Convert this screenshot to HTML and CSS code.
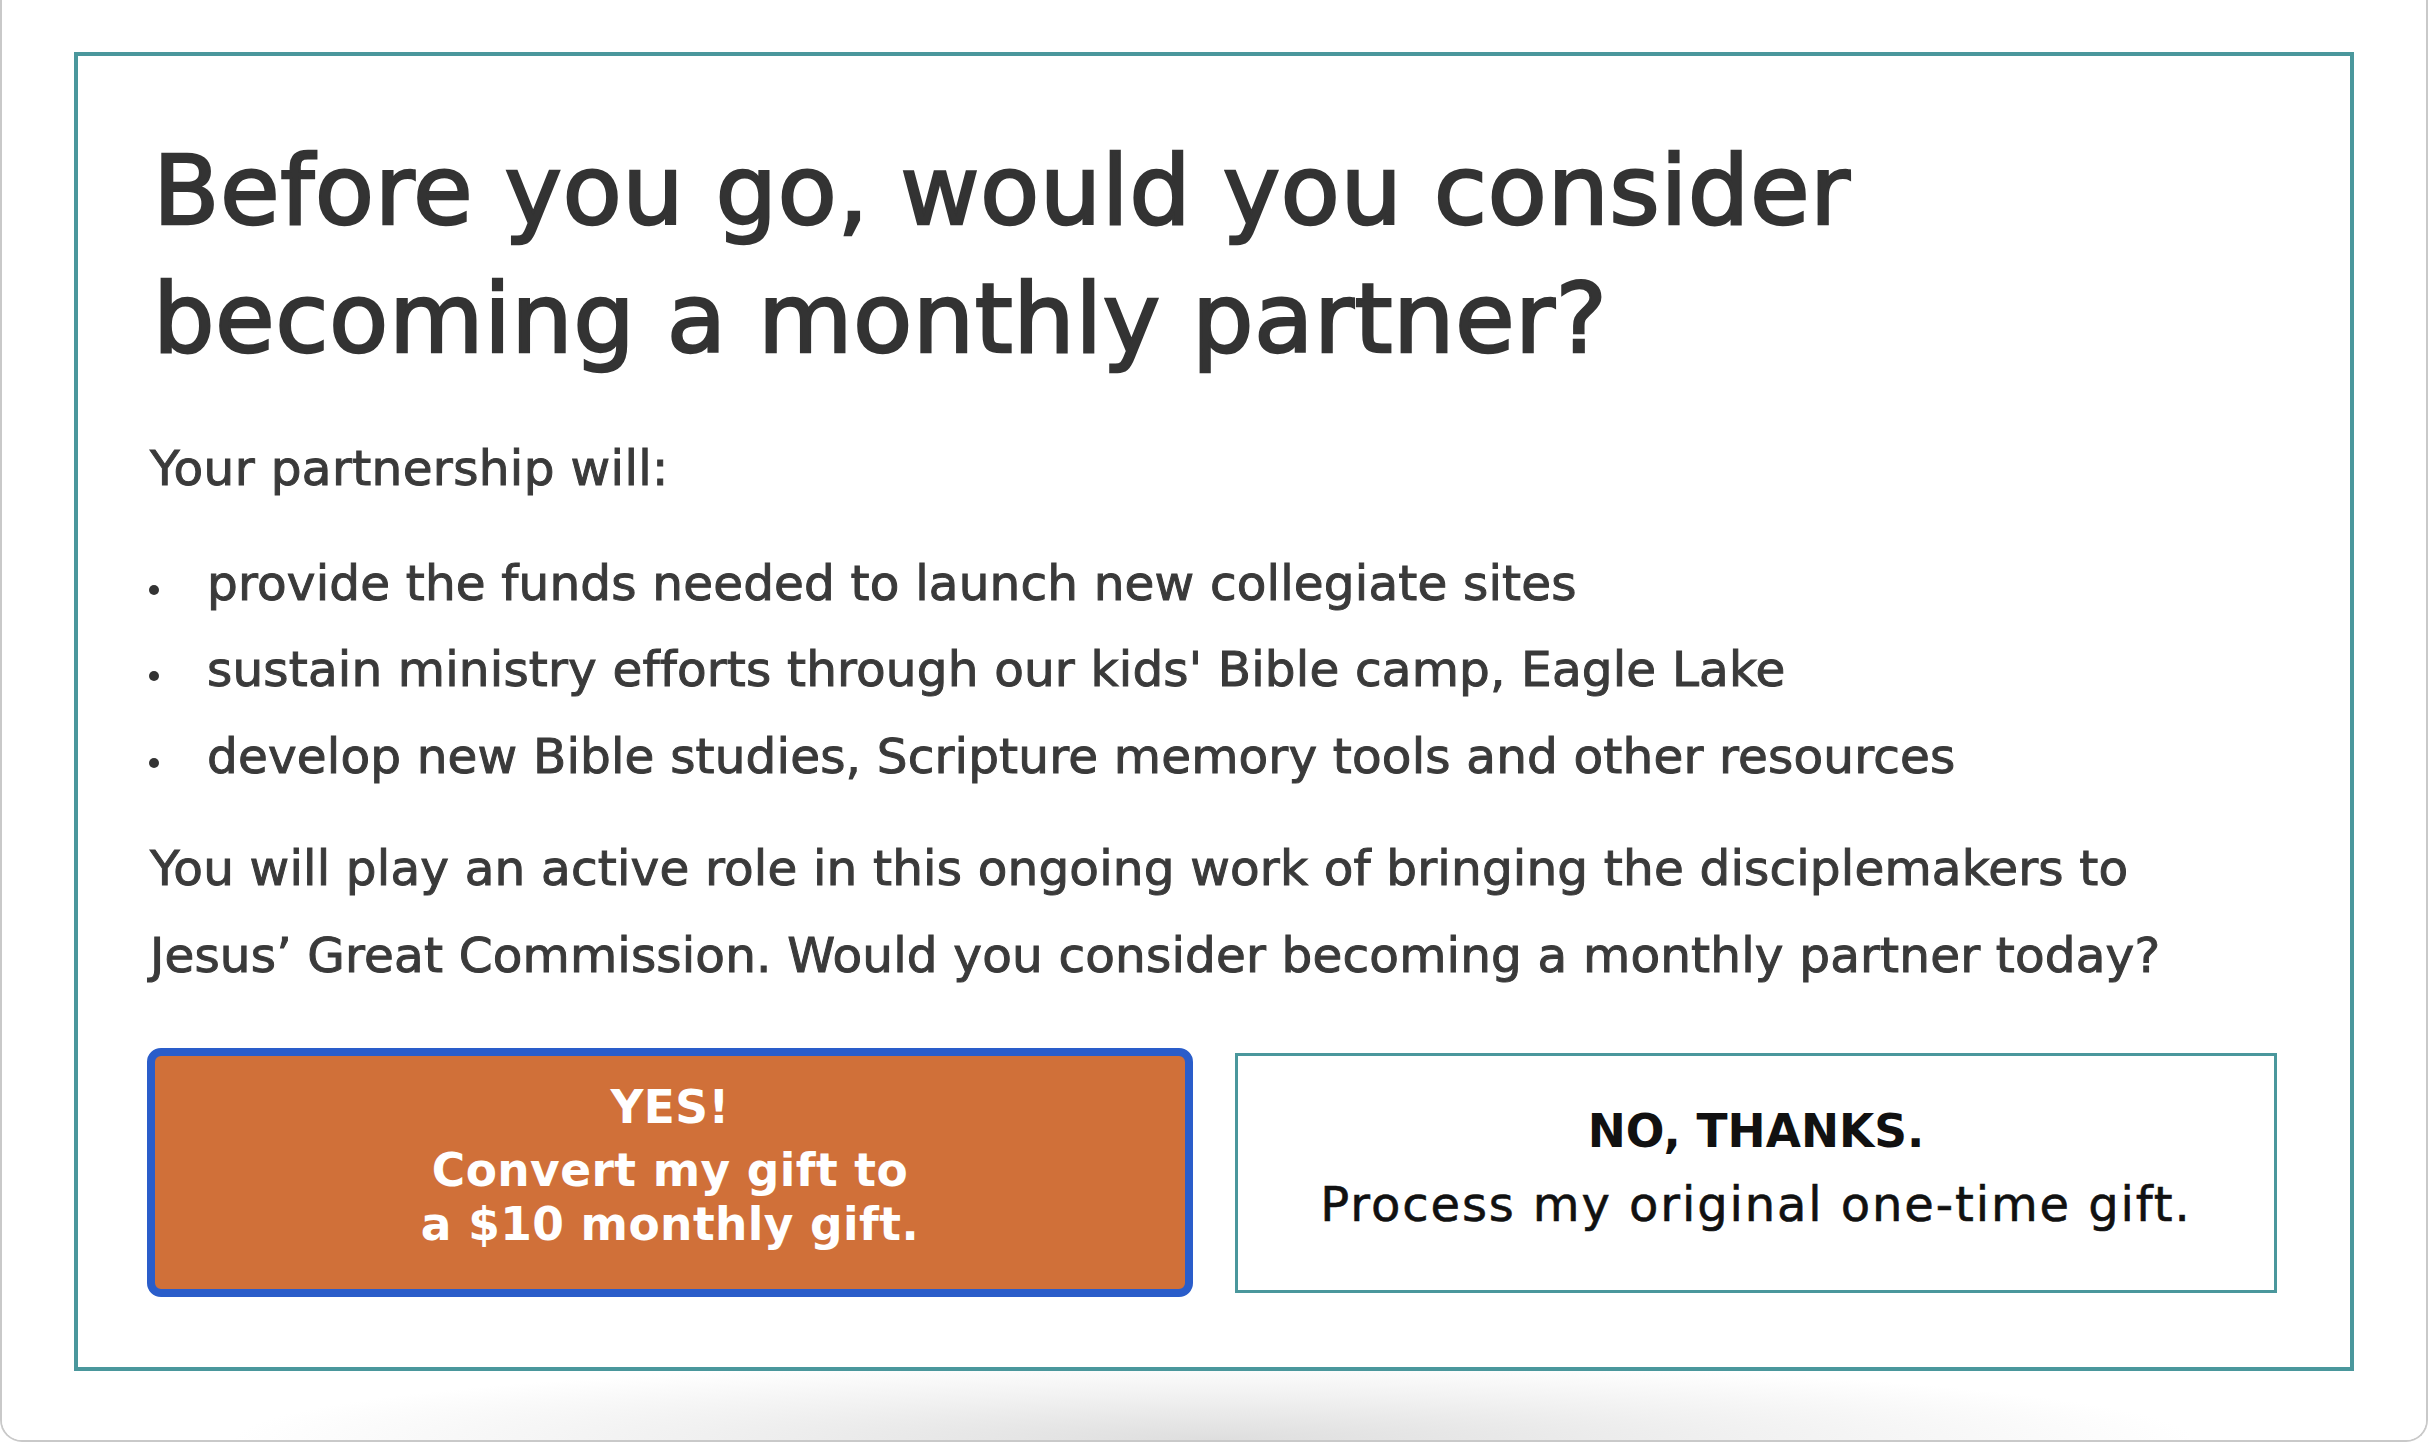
FILE: index.html
```html
<!DOCTYPE html>
<html lang="en">
<head>
<meta charset="utf-8">
<title>Monthly partner</title>
<link rel="stylesheet" href="styles.css">
</head>
<body>
<div class="window">
  <div class="card">
    <h1 class="title">Before you go, would you consider becoming a monthly partner?</h1>
    <p class="text lead">Your partnership will:</p>
    <ul class="list">
      <li class="item">provide the funds needed to launch new collegiate sites</li>
      <li class="item">sustain ministry efforts through our kids' Bible camp, Eagle Lake</li>
      <li class="item">develop new Bible studies, Scripture memory tools and other resources</li>
    </ul>
    <p class="text closing">You will play an active role in this ongoing work of bringing the disciplemakers to Jesus’ Great Commission. Would you consider becoming a monthly partner today?</p>
    <div class="actions">
      <button class="btn btn-yes" type="button">
        <span class="yes-head">YES!</span>
        <span class="yes-body">Convert my gift to<br>a $10 monthly gift.</span>
      </button>
      <button class="btn btn-no" type="button">
        <span class="no-head">NO, THANKS.</span>
        <span class="no-body">Process my original one-time gift.</span>
      </button>
    </div>
  </div>
  <div class="shade"></div>
</div>
</body>
</html>
```
FILE: styles.css
```css
* { box-sizing: border-box; }
html, body { margin: 0; padding: 0; background: #ffffff; }
body {
  width: 2430px;
  height: 1442px;
  overflow: hidden;
  font-family: "DejaVu Sans", "Liberation Sans", sans-serif;
}
.window {
  width: 2428px;
  height: 1442px;
  border: 2px solid #c9c9c9;
  border-top: none;
  border-radius: 0 0 22px 22px;
  padding-top: 52px;
  display: flex;
  flex-direction: column;
  overflow: hidden;
  background: #fff;
}
.card {
  margin-left: 72px;
  width: 2280px;
  border: 4px solid #4a979c;
  padding: 71px 73px 70px 69px;
  flex: none;
}
.title {
  margin: 0;
  padding-left: 6px;
  max-width: 1920px;
  font-size: 97px;
  line-height: 128px;
  font-weight: 400;
  letter-spacing: 0.5px;
  color: #333333;
  -webkit-text-stroke: 2.4px #333333;
}
.text {
  margin: 0;
  padding-left: 3px;
  font-size: 48.5px;
  line-height: 86.5px;
  letter-spacing: 0.15px;
  color: #3a3a3a;
  -webkit-text-stroke: 1px #3a3a3a;
}
.lead { margin-top: 42px; letter-spacing: 0.35px; }
.closing { margin-top: 26px; max-width: 2075px; }
.list {
  list-style: none;
  margin: 28px 0 0;
  padding: 0;
}
.item {
  display: flex;
  font-size: 48.5px;
  line-height: 86.5px;
  letter-spacing: 0.15px;
  color: #3a3a3a;
  -webkit-text-stroke: 1px #3a3a3a;
}
.item::before {
  content: "";
  flex: none;
  width: 10px;
  height: 10px;
  border-radius: 50%;
  background: #333333;
  margin: 45px 48px 0 2px;
}
.actions {
  margin-top: 50px;
  display: grid;
  grid-template-columns: 1046px 1042px;
  column-gap: 42px;
  align-items: center;
}
.btn {
  display: flex;
  flex-direction: column;
  align-items: center;
  justify-content: center;
  font-family: "DejaVu Sans", "Liberation Sans", sans-serif;
  margin: 0;
  cursor: pointer;
}
.btn-yes {
  height: 249px;
  background: #d07039;
  border: 8px solid #2a5dca;
  border-radius: 14px;
  color: #ffffff;
  font-weight: 700;
  font-size: 45.5px;
  line-height: 54px;
  letter-spacing: 0.4px;
  padding: 0 0 13px;
}
.yes-head { display: block; margin-bottom: 9px; }
.yes-body { display: block; }
.btn-no {
  height: 240px;
  background: #ffffff;
  border: 3px solid #4a979c;
  border-radius: 0;
  color: #111111;
  padding: 0 0 10px;
  line-height: 72px;
}
.no-head {
  display: block;
  font-weight: 700;
  font-size: 45.5px;
}
.no-body {
  display: block;
  font-size: 48px;
  letter-spacing: 1.9px;
  -webkit-text-stroke: 0.6px #111111;
}
.shade {
  flex: 1;
  background: radial-gradient(ellipse 980px 80px at 50% 100%, #dedede 0%, #f1f1f1 55%, #ffffff 100%);
}
```
